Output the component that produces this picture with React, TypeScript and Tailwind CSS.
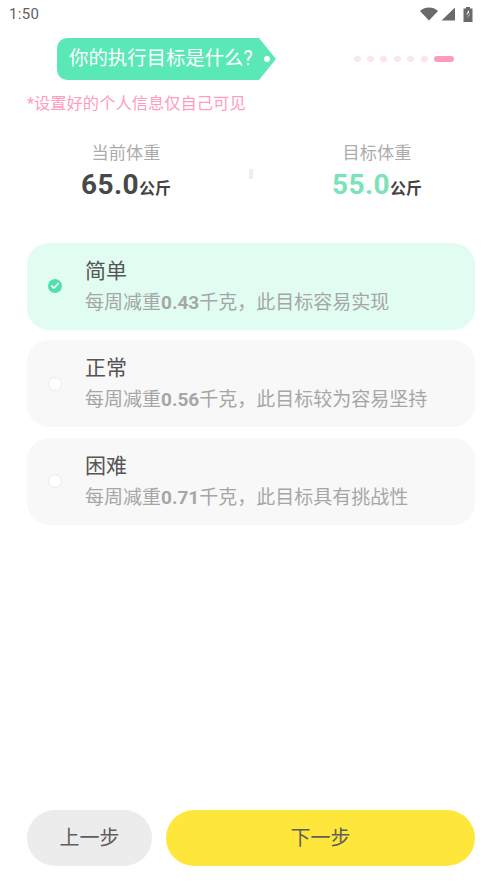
/**
 * Weight goal step: tag header, current / target weight, difficulty options
 */
import { Check } from 'lucide-react';

const FONT = '[font-family:Roboto,"Noto_Sans_CJK_SC",sans-serif]';

const options = [
  { title: '简单', rate: '0.43', note: '此目标容易实现', active: true },
  { title: '正常', rate: '0.56', note: '此目标较为容易坚持', active: false },
  { title: '困难', rate: '0.71', note: '此目标具有挑战性', active: false },
];

const StatusBar = () => (
  <div className="flex h-[28px] items-center justify-between pl-[9px] pr-[29px] text-[#5f5f5f]">
    <span className="text-[15px] leading-none tracking-[0.3px]">1:50</span>
    <div className="flex items-center gap-[3px]">
      <svg width="18" height="14" viewBox="0 0 18 14" fill="#6a6a6a">
        <path d="M0 4 C5 -0.6 13 -0.6 18 4 L9 13.5 Z" />
      </svg>
      <svg width="14" height="14" viewBox="0 0 14 14" fill="#6a6a6a">
        <path d="M14 0.5 V13.5 H0.5 Z" />
      </svg>
      <svg width="10" height="15" viewBox="0 0 10 15" className="ml-[5px]">
        <path d="M3 0 H7 V1.5 H9.5 V15 H0.5 V1.5 H3 Z" fill="#6a6a6a" />
        <path d="M5.6 3 L3.4 7.6 H4.8 V6 L6.6 6.2 L4.4 11.5 L5 8.4 H6.6 Z" fill="#fff" />
      </svg>
    </div>
  </div>
);

const Progress = () => (
  <div className="flex items-center gap-[6.4px]">
    {[0, 1, 2, 3, 4, 5].map(i => (
      <span key={i} className="h-[6px] w-[7px] rounded-full bg-[#fbe6ea]" />
    ))}
    <span className="h-[6px] w-[20px] rounded-full bg-[#ff9cba]" />
  </div>
);

const Stat = ({ label, value, color }: { label: string; value: string; color: string }) => (
  <div className="flex w-[180px] flex-col items-center">
    <span className="text-[17.2px] leading-[22px] text-[#acacac]">{label}</span>
    <div className="mt-[5px] flex items-baseline leading-[32px]">
      <span className={`text-[28px] font-bold tracking-[0.4px] ${color}`}>{value}</span>
      <span className="text-[16px] font-bold text-[#444444]">公斤</span>
    </div>
  </div>
);

const App = () => (
  <div className={`flex h-[892px] w-[502px] flex-col bg-white ${FONT}`}>
    <StatusBar />

    {/* Header */}
    <div className="mt-[10px] flex items-center justify-between pl-[57px] pr-[48px]">
      <div className="flex h-[42px] w-[219px] items-center justify-between rounded-l-[10px] bg-[#5ae8b6] pl-[12px] pr-[6px] [clip-path:polygon(0_0,202px_0,100%_50%,202px_100%,0_100%)]">
        <span className="whitespace-nowrap text-[19.4px] text-white">你的执行目标是什么?</span>
        <span className="h-[6px] w-[6px] shrink-0 rounded-full bg-white" />
      </div>
      <Progress />
    </div>

    <p className="mt-[12px] pl-[27px] text-[16.3px] leading-[24px] text-[#ff9cc0]">*设置好的个人信息仅自己可见</p>

    {/* Weights */}
    <div className="mt-[26px] flex items-center pl-[36px] pr-[35px]">
      <Stat label="当前体重" value="65.0" color="text-[#484848]" />
      <div className="ml-[33px] mr-auto h-[10px] w-[4px] bg-[#eeeeee]" />
      <Stat label="目标体重" value="55.0" color="text-[#7ce2b8]" />
    </div>

    {/* Options */}
    <div className="mt-[37.5px] flex flex-col gap-[10.5px] px-[27px]">
      {options.map(o => (
        <div
          key={o.title}
          className={`flex h-[87px] items-center rounded-[22px] pl-[21px] ${o.active ? 'bg-[#e1fdf2]' : 'bg-[#f8f8f8]'}`}
        >
          {o.active ? (
            <span className="flex h-[14px] w-[14px] items-center justify-center rounded-full bg-[#4fe0ad]">
              <Check size={10} strokeWidth={4} className="text-white" />
            </span>
          ) : (
            <span className="h-[14px] w-[14px] rounded-full border border-[#ebebeb] bg-white" />
          )}
          <div className="ml-[23px] flex flex-col">
            <span className="text-[21px] leading-[30px] text-[#555555]">{o.title}</span>
            <span className="mt-[2px] text-[19px] leading-[29px] text-[#a6a6a6]">
              每周减重<span className="font-bold">{o.rate}</span>千克，{o.note}
            </span>
          </div>
        </div>
      ))}
    </div>

    {/* Footer */}
    <div className="mt-auto mb-[26px] flex gap-[14px] px-[27px]">
      <button className="h-[56px] w-[125px] rounded-full bg-[#ececec] text-[20px] text-[#5e5e5e]">上一步</button>
      <button className="h-[56px] flex-1 rounded-full bg-[#ffe63b] text-[20px] text-[#5e5e5e]">下一步</button>
    </div>
  </div>
);

export default App;
